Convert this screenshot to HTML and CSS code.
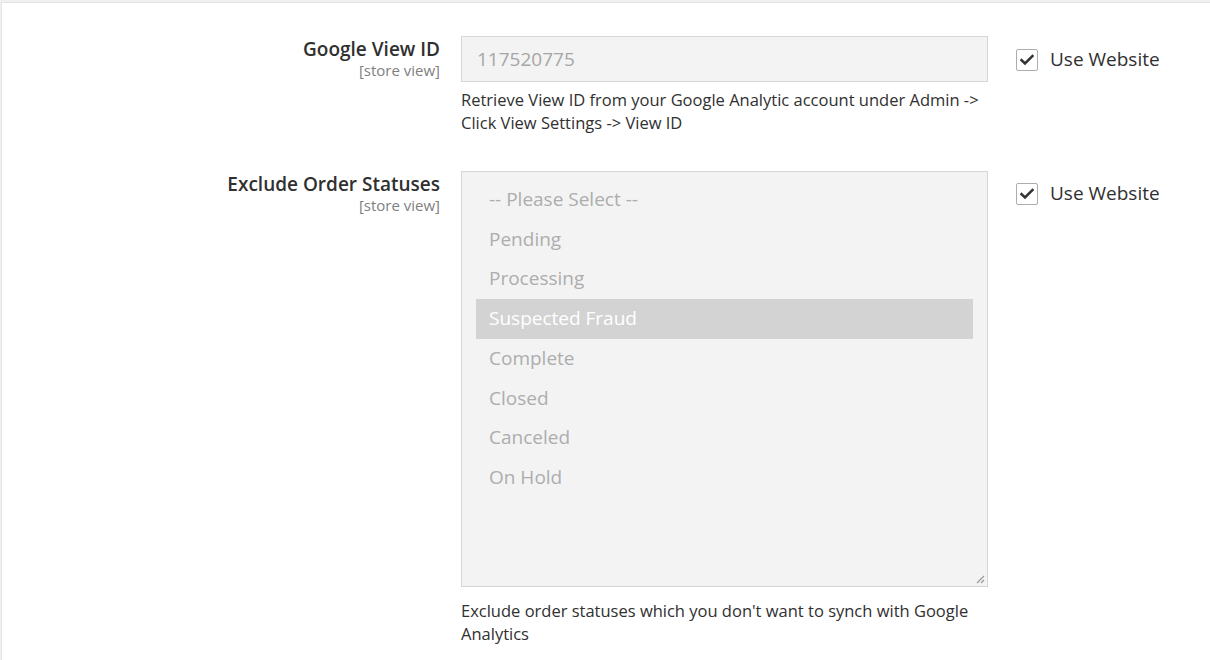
FILE: index.html
```html
<!DOCTYPE html>
<html>
<head>
<meta charset="utf-8">
<link rel="stylesheet" href="styles.css">
</head>
<body>
<div class="panel">
  <div class="row row-first">
    <div class="label">
      <span class="label-text">Google View ID</span>
      <span class="scope">[store view]</span>
    </div>
    <div class="control">
      <div class="input">117520775</div>
      <div class="note">Retrieve View ID from your Google Analytic account under Admin -&gt; Click View Settings -&gt; View ID</div>
    </div>
    <div class="use-default">
      <span class="checkbox"><svg width="14" height="12" viewBox="0 0 14 12"><path d="M1.5 6.2 L5 9.5 L12.5 2" fill="none" stroke="#333" stroke-width="2.6" stroke-linecap="square"/></svg></span>
      <span class="use-label">Use Website</span>
    </div>
  </div>
  <div class="row row-second">
    <div class="label">
      <span class="label-text">Exclude Order Statuses</span>
      <span class="scope">[store view]</span>
    </div>
    <div class="control">
      <div class="multiselect">
        <div class="option">-- Please Select --</div>
        <div class="option">Pending</div>
        <div class="option">Processing</div>
        <div class="option selected">Suspected Fraud</div>
        <div class="option">Complete</div>
        <div class="option">Closed</div>
        <div class="option">Canceled</div>
        <div class="option">On Hold</div>
        <svg class="resize" width="10" height="10" viewBox="0 0 10 10"><path d="M9 2 L2 9 M9 6 L6 9" stroke="#999" stroke-width="1.2"/></svg>
      </div>
      <div class="note">Exclude order statuses which you don't want to synch with Google Analytics</div>
    </div>
    <div class="use-default">
      <span class="checkbox"><svg width="14" height="12" viewBox="0 0 14 12"><path d="M1.5 6.2 L5 9.5 L12.5 2" fill="none" stroke="#333" stroke-width="2.6" stroke-linecap="square"/></svg></span>
      <span class="use-label">Use Website</span>
    </div>
  </div>
</div>
</body>
</html>
```
FILE: styles.css
```css
html, body {
  margin: 0;
  padding: 0;
}
body {
  background: #f0f0f0;
  font-family: "Open Sans", "Liberation Sans", sans-serif;
  color: #303030;
  height: 660px;
  overflow: hidden;
}
.panel {
  box-sizing: border-box;
  margin: 2px 0 0 1px;
  border-top: 1px solid #e3e3e3;
  border-left: 1px solid #e3e3e3;
  background: #fff;
  height: 658px;
  overflow: hidden;
}
.row {
  display: grid;
  grid-template-columns: 459px 527px auto;
}
.row-first {
  padding-top: 33px;
}
.row-second {
  padding-top: 37px;
}
.label {
  box-sizing: border-box;
  display: flex;
  flex-direction: column;
  align-items: flex-end;
  padding-right: 21px;
  padding-top: 1px;
}
.label-text {
  font-size: 19px;
  font-weight: 600;
  line-height: 24px;
  color: #303030;
}
.scope {
  font-size: 15px;
  line-height: 18px;
  color: #808080;
}
.input {
  box-sizing: border-box;
  height: 46px;
  border: 1px solid #d6d6d6;
  background: #f3f3f3;
  color: #a6a6a6;
  font-size: 19px;
  padding: 0 15px;
  line-height: 44px;
}
.note {
  font-size: 16.5px;
  line-height: 23px;
  color: #303030;
  margin-top: 6px;
  padding-right: 2px;
}
.row-second .note {
  margin-top: 12px;
}
.multiselect {
  position: relative;
  box-sizing: border-box;
  height: 416px;
  border: 1px solid #d6d6d6;
  background: #f3f3f3;
  padding: 8px 14px;
}
.option {
  font-size: 19px;
  line-height: 39.7px;
  color: #adadad;
  padding-left: 13px;
}
.option.selected {
  background: #d3d3d3;
  color: #ffffff;
}
.resize {
  position: absolute;
  right: 2px;
  bottom: 2px;
}
.use-default {
  display: flex;
  align-items: center;
  padding-left: 28px;
  height: 46px;
}
.row-second .use-default {
  height: 44px;
}
.checkbox {
  box-sizing: border-box;
  width: 22px;
  height: 22px;
  border: 1px solid #adadad;
  border-radius: 2px;
  background: #fff;
  display: flex;
  align-items: center;
  justify-content: center;
  margin-top: 1px;
}
.use-label {
  font-size: 19px;
  color: #303030;
  margin-left: 12px;
}
```
